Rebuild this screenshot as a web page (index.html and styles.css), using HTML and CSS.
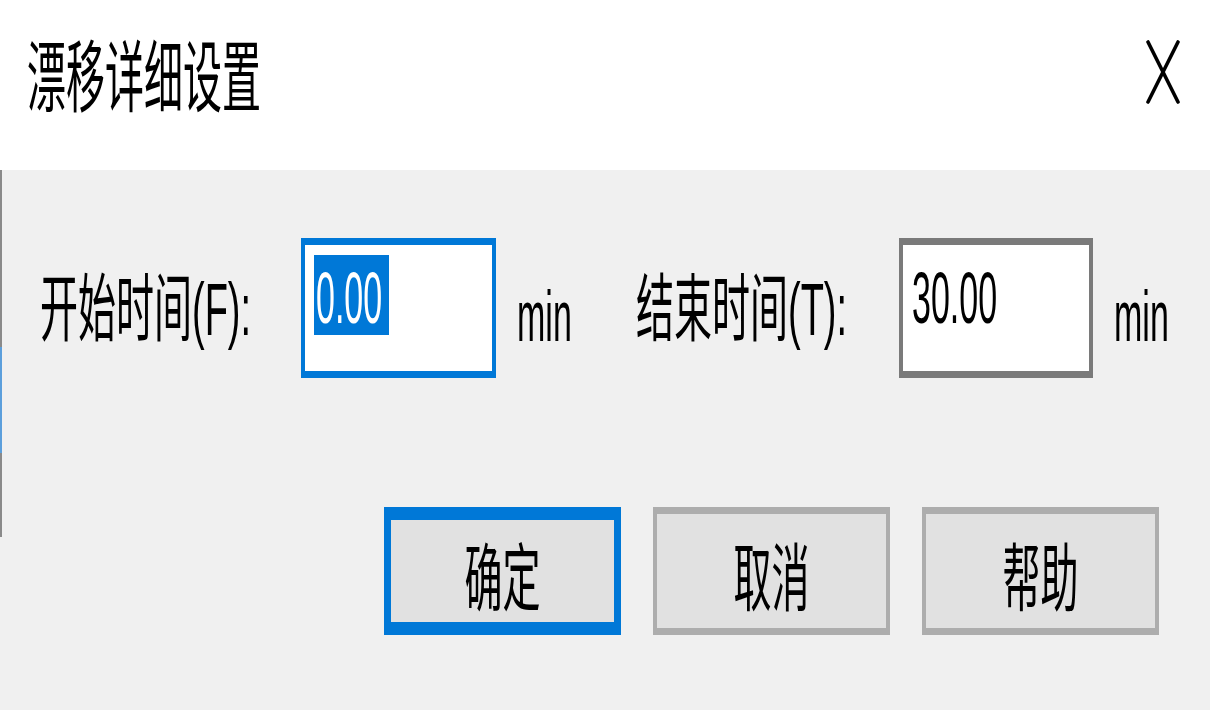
FILE: index.html
```html
<!DOCTYPE html>
<html lang="zh">
<head>
<meta charset="utf-8">
<title>漂移详细设置</title>
<link rel="stylesheet" href="styles.css">
</head>
<body>
<div class="dialog">
  <div class="titlebar">
    <span class="title"><span class="t">漂移详细设置</span></span>
    <svg class="close" width="34" height="64" viewBox="0 0 34 64">
      <path d="M2 2 L32 62 M32 2 L2 62" stroke="#000" stroke-width="3.6" fill="none" stroke-linecap="round"/>
    </svg>
  </div>
  <div class="body">
    <div class="row">
      <div class="label"><span class="t">开始时间(F):</span></div>
      <div class="field focus"><span class="line"><span class="sel"><span class="num">0.00</span></span></span></div>
      <div class="unit"><span class="t u">min</span></div>
      <div class="label"><span class="t">结束时间(T):</span></div>
      <div class="field"><span class="line"><span class="num">30.00</span></span></div>
      <div class="unit"><span class="t u">min</span></div>
    </div>
    <div class="buttons">
      <div class="btn default"><span class="t">确定</span></div>
      <div class="btn"><span class="t">取消</span></div>
      <div class="btn"><span class="t">帮助</span></div>
    </div>
  </div>
</div>
</body>
</html>
```

FILE: styles.css
```css
html, body {
  margin: 0;
  padding: 0;
}
body {
  width: 1210px;
  height: 710px;
  overflow: hidden;
  font-family: "Liberation Sans", "Noto Sans CJK SC", sans-serif;
  color: #000;
  background: #f0f0f0;
}
.dialog {
  width: 1210px;
  height: 710px;
  display: flex;
  flex-direction: column;
}
.t {
  display: inline-block;
  line-height: 1;
  transform: scaleY(1.95);
  white-space: nowrap;
}
.titlebar {
  height: 170px;
  background: #fff;
  display: flex;
  align-items: flex-start;
  justify-content: space-between;
  padding: 0 30px 0 27px;
  box-sizing: border-box;
}
.title {
  margin-top: 44px;
  font-family: "Noto Sans CJK SC", sans-serif;
  font-size: 39px;
}
.title .t {
  transform: scaleY(2);
}
.close {
  margin-top: 40px;
}
.body {
  flex: 1;
  padding: 68px 0 0 40px;
  background:
    linear-gradient(to bottom, #8a8a8a 0 177px, #5c9fdc 177px 283px, #8a8a8a 283px 367px) no-repeat 0 0 / 2px 367px,
    #f0f0f0;
}
.row {
  display: grid;
  grid-template-columns: 261px 195px 140px 263px 194px auto;
  align-items: center;
  height: 140px;
}
.label {
  font-size: 38px;
  margin-top: 4px;
}
.unit {
  padding-left: 21px;
  margin-top: 16px;
}
.u {
  font-size: 34px;
  transform: scaleY(2.1);
}
.field {
  height: 140px;
  box-sizing: border-box;
  background: #fff;
  border-style: solid;
  border-color: #7a7a7a;
  border-width: 7px 4px;
  padding: 10px 0 0 7px;
}
.field.focus {
  border-color: #0078d7;
  padding-left: 9px;
}
.line {
  display: flex;
  align-items: center;
  height: 80px;
  padding-left: 2px;
}
.field.focus .line {
  padding-left: 0;
}
.sel {
  display: inline-flex;
  align-items: center;
  height: 80px;
  padding: 0 7px 0 2px;
  background: #0078d7;
  color: #fff;
}
.num {
  display: inline-block;
  font-size: 34px;
  line-height: 1;
  transform: scaleY(2.1);
  margin-top: 6px;
}
.buttons {
  display: flex;
  justify-content: flex-end;
  gap: 32px;
  padding-right: 51px;
  margin-top: 129px;
}
.btn {
  width: 237px;
  height: 128px;
  box-sizing: border-box;
  background: #e1e1e1;
  border: solid #adadad;
  border-width: 7px 4px;
  display: flex;
  align-items: center;
  justify-content: center;
  font-family: "Noto Sans CJK SC", sans-serif;
  font-size: 38px;
  padding-top: 6px;
}
.btn.default {
  border-color: #0078d7;
  border-width: 13px 7px;
}
```
